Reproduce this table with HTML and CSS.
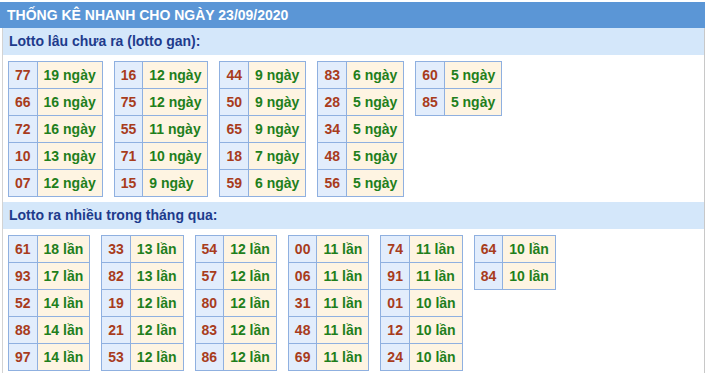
FILE: index.html
```html
<!DOCTYPE html>
<html lang="vi">
<head>
<meta charset="utf-8">
<title>Thống kê nhanh</title>
<link rel="stylesheet" href="styles.css">
</head>
<body>
<div class="wrap">
  <div class="hdr">THỐNG KÊ NHANH CHO NGÀY 23/09/2020</div>
  <div class="panel">
    <div class="sub">Lotto lâu chưa ra (lotto gan):</div>
    <div class="grid grid-first">
      <table class="lt"><tr><td class="n">77</td><td class="v">19 ngày</td></tr><tr><td class="n">66</td><td class="v">16 ngày</td></tr><tr><td class="n">72</td><td class="v">16 ngày</td></tr><tr><td class="n">10</td><td class="v">13 ngày</td></tr><tr><td class="n">07</td><td class="v">12 ngày</td></tr></table>
      <table class="lt"><tr><td class="n">16</td><td class="v">12 ngày</td></tr><tr><td class="n">75</td><td class="v">12 ngày</td></tr><tr><td class="n">55</td><td class="v">11 ngày</td></tr><tr><td class="n">71</td><td class="v">10 ngày</td></tr><tr><td class="n">15</td><td class="v">9 ngày</td></tr></table>
      <table class="lt"><tr><td class="n">44</td><td class="v">9 ngày</td></tr><tr><td class="n">50</td><td class="v">9 ngày</td></tr><tr><td class="n">65</td><td class="v">9 ngày</td></tr><tr><td class="n">18</td><td class="v">7 ngày</td></tr><tr><td class="n">59</td><td class="v">6 ngày</td></tr></table>
      <table class="lt"><tr><td class="n">83</td><td class="v">6 ngày</td></tr><tr><td class="n">28</td><td class="v">5 ngày</td></tr><tr><td class="n">34</td><td class="v">5 ngày</td></tr><tr><td class="n">48</td><td class="v">5 ngày</td></tr><tr><td class="n">56</td><td class="v">5 ngày</td></tr></table>
      <table class="lt"><tr><td class="n">60</td><td class="v">5 ngày</td></tr><tr><td class="n">85</td><td class="v">5 ngày</td></tr></table>
    </div>
    <div class="sub">Lotto ra nhiều trong tháng qua:</div>
    <div class="grid">
      <table class="lt"><tr><td class="n">61</td><td class="v">18 lần</td></tr><tr><td class="n">93</td><td class="v">17 lần</td></tr><tr><td class="n">52</td><td class="v">14 lần</td></tr><tr><td class="n">88</td><td class="v">14 lần</td></tr><tr><td class="n">97</td><td class="v">14 lần</td></tr></table>
      <table class="lt"><tr><td class="n">33</td><td class="v">13 lần</td></tr><tr><td class="n">82</td><td class="v">13 lần</td></tr><tr><td class="n">19</td><td class="v">12 lần</td></tr><tr><td class="n">21</td><td class="v">12 lần</td></tr><tr><td class="n">53</td><td class="v">12 lần</td></tr></table>
      <table class="lt"><tr><td class="n">54</td><td class="v">12 lần</td></tr><tr><td class="n">57</td><td class="v">12 lần</td></tr><tr><td class="n">80</td><td class="v">12 lần</td></tr><tr><td class="n">83</td><td class="v">12 lần</td></tr><tr><td class="n">86</td><td class="v">12 lần</td></tr></table>
      <table class="lt"><tr><td class="n">00</td><td class="v">11 lần</td></tr><tr><td class="n">06</td><td class="v">11 lần</td></tr><tr><td class="n">31</td><td class="v">11 lần</td></tr><tr><td class="n">48</td><td class="v">11 lần</td></tr><tr><td class="n">69</td><td class="v">11 lần</td></tr></table>
      <table class="lt"><tr><td class="n">74</td><td class="v">11 lần</td></tr><tr><td class="n">91</td><td class="v">11 lần</td></tr><tr><td class="n">01</td><td class="v">10 lần</td></tr><tr><td class="n">12</td><td class="v">10 lần</td></tr><tr><td class="n">24</td><td class="v">10 lần</td></tr></table>
      <table class="lt"><tr><td class="n">64</td><td class="v">10 lần</td></tr><tr><td class="n">84</td><td class="v">10 lần</td></tr></table>
    </div>
  </div>
</div>
</body>
</html>
```
FILE: styles.css
```css
html, body {
  margin: 0;
  padding: 0;
  background: #ffffff;
  font-family: "Liberation Sans", Arial, sans-serif;
  font-size: 14px;
  font-weight: bold;
}
.wrap {
  width: 705px;
  padding-top: 2px;
}
.hdr {
  height: 26px;
  line-height: 26px;
  background: #5b96d6;
  color: #ffffff;
  padding-left: 7px;
}
.panel {
  margin-left: 2px;
  width: 701px;
  border-left: 1px solid #d3d3d3;
  border-right: 1px solid #c8c8c8;
  min-height: 345px;
}
.sub {
  height: 27px;
  line-height: 27px;
  background: #d4e7fa;
  color: #1e3b8c;
  padding-left: 6px;
}
.grid {
  display: flex;
  align-items: flex-start;
  gap: 11px;
  padding: 6px 0 2px 5px;
}
.grid-first {
  padding-bottom: 5px;
}
.lt {
  border-collapse: collapse;
  border: 1px solid #8fb0e0;
}
.lt td {
  border: 1px solid #8fb0e0;
  padding: 0 6px;
  height: 26px;
  line-height: 26px;
  white-space: nowrap;
}
.n {
  background: #e2edfc;
  color: #a83c1c;
}
.v {
  background: #fef4e2;
  color: #1f7f1c;
}
```
